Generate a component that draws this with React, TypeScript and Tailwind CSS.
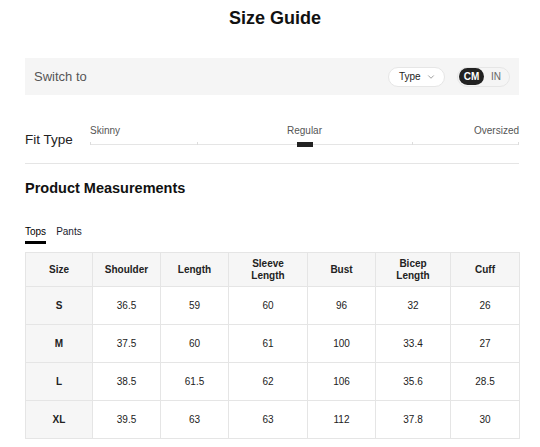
import { ChevronDown } from 'lucide-react';

const columns = ['Size', 'Shoulder', 'Length', 'Sleeve Length', 'Bust', 'Bicep Length', 'Cuff'];
const widths = ['w-[67px]', 'w-[68px]', 'w-[68px]', 'w-[79px]', 'w-[68px]', 'w-[75px]', 'w-[69px]'];

const rows = [
  ['S', '36.5', '59', '60', '96', '32', '26'],
  ['M', '37.5', '60', '61', '100', '33.4', '27'],
  ['L', '38.5', '61.5', '62', '106', '35.6', '28.5'],
  ['XL', '39.5', '63', '63', '112', '37.8', '30'],
];

export default function App() {
  return (
    <div className="min-h-screen bg-white pl-[25px] pr-[21px] text-[#222] font-['Liberation_Sans',Arial,sans-serif]">
      <h1 className="pl-[6px] pt-[8px] text-center text-[18px] leading-[21px] font-bold text-[#111]">Size Guide</h1>

      {/* Switch bar */}
      <div className="mt-[29px] flex h-[37px] items-center justify-between bg-[#f5f5f5] px-[9px]">
        <span className="text-[13px] text-[#555]">Switch to</span>
        <div className="flex items-center gap-[12px]">
          <button className="flex h-[20px] w-[57px] items-center gap-[5px] rounded-full border border-[#e6e6e6] bg-white pl-[10px] text-[10px] text-[#222]">
            Type
            <ChevronDown className="h-[10px] w-[10px] text-[#666]" strokeWidth={1.5} />
          </button>
          <div className="flex h-[20px] w-[53px] items-center rounded-full border border-[#e6e6e6] bg-[#f5f5f5] pl-px">
            <span className="flex h-[17px] w-[25px] items-center justify-center rounded-full bg-[#222] text-[10px] font-bold text-white">CM</span>
            <span className="ml-[7px] text-[10px] text-[#666]">IN</span>
          </div>
        </div>
      </div>

      {/* Fit type */}
      <div className="mt-[30px] flex items-start">
        <div className="w-[65px] pt-[7px] text-[13.5px] leading-[15px] text-[#222]">Fit Type</div>
        <div className="flex-1">
          <div className="grid grid-cols-3 text-[10px] leading-[12px] text-[#555]">
            <span className="text-left">Skinny</span>
            <span className="text-center">Regular</span>
            <span className="text-right">Oversized</span>
          </div>
          <div className="relative mt-[5px] h-[6px]">
            <div className="absolute left-0 right-0 top-[2px] h-px bg-[#e5e5e5]" />
            <div className="absolute left-0 top-0 h-[3px] w-px bg-[#ddd]" />
            <div className="absolute left-1/4 top-0 h-[3px] w-px bg-[#ddd]" />
            <div className="absolute left-3/4 top-0 h-[3px] w-px bg-[#ddd]" />
            <div className="absolute right-0 top-0 h-[3px] w-px bg-[#ddd]" />
            <div className="absolute left-1/2 top-0 h-[5px] w-[16px] -translate-x-1/2 bg-[#222]" />
          </div>
        </div>
      </div>

      <div className="mt-[15px] h-px bg-[#e5e5e5]" />

      <h2 className="mt-[16px] text-[14.5px] leading-[17px] font-bold text-[#111]">Product Measurements</h2>

      {/* Tabs */}
      <div className="mt-[29px] flex gap-[10px] text-[10px] leading-[12px]">
        <div className="flex flex-col">
          <span className="text-black">Tops</span>
          <span className="mt-[3px] h-[3px] bg-black" />
        </div>
        <span className="text-[#1a1a2e]">Pants</span>
      </div>

      <table className="mt-[8px] w-full table-fixed border-collapse text-[10px] leading-[11.5px]">
        <thead>
          <tr className="h-[34px] bg-[#f6f6f6]">
            {columns.map((c, i) => (
              <th key={c} className={`${widths[i]} border border-[#e5e5e5] px-2 font-bold text-[#222]`}>
                {c}
              </th>
            ))}
          </tr>
        </thead>
        <tbody>
          {rows.map((r) => (
            <tr key={r[0]} className="h-[38px]">
              {r.map((v, i) => (
                <td
                  key={i}
                  className={
                    i === 0
                      ? 'border border-[#e5e5e5] bg-[#f6f6f6] text-center font-bold text-[#222]'
                      : 'border border-[#e5e5e5] text-center text-[#222]'
                  }
                >
                  {v}
                </td>
              ))}
            </tr>
          ))}
        </tbody>
      </table>
    </div>
  );
}
